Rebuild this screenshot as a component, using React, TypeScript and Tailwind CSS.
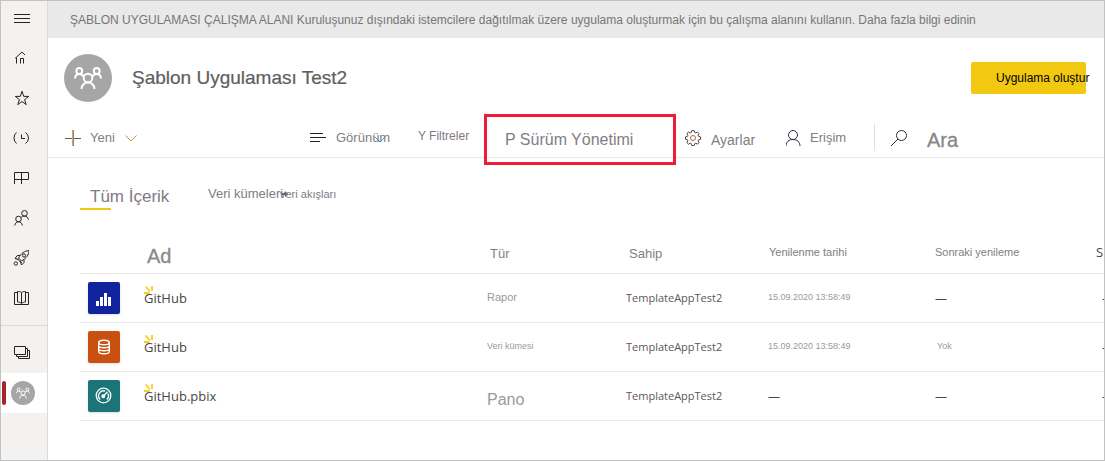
import React from "react";

type IconProps = { className?: string; children: React.ReactNode; box?: string };

function Icon({ className = "w-4 h-4", children, box = "0 0 16 16" }: IconProps) {
  return (
    <svg
      viewBox={box}
      className={`shrink-0 ${className}`}
      fill="none"
      stroke="currentColor"
      strokeWidth="1"
      aria-hidden="true"
    >
      {children}
    </svg>
  );
}

function GroupIcon({ className }: { className: string }) {
  return (
    <svg viewBox="0 0 28 24" className={className} fill="none" stroke="#fff" strokeWidth="2" aria-hidden="true">
      <circle cx="14" cy="12" r="4.3" />
      <path d="M7.500 23c.4-4 2.800-6.600 6.500-6.600s6.100 2.600 6.500 6.600" />
      <circle cx="5.300" cy="5" r="2.900" />
      <circle cx="22.700" cy="5" r="2.900" />
      <path d="M1 12.500C1.200 9.800 2.700 8 5.300 8c1.800 0 3.300.9 4 2.300M27 12.500C26.800 9.800 25.300 8 22.700 8c-1.800 0-3.300.9-4 2.300" />
    </svg>
  );
}

const navItems = [
  {
    label: "Giriş",
    icon: (
      <Icon>
        <path d="M3.500 13.500V8L2.500 8 9 2l3 3M7.500 13.500v-5h3v5" />
      </Icon>
    ),
  },
  {
    label: "Sık kullanılanlar",
    icon: (
      <Icon>
        <path d="M9 1.200l1.700 5.200h5l-4.100 3.200 1.600 5L9 11.500l-4.200 3.100 1.600-5-4.100-3.200h5z" />
      </Icon>
    ),
  },
  {
    label: "Son kullanılanlar",
    icon: (
      <Icon>
        <path d="M3.500 2.500Q1 4.500 1 8t2.500 5.500M12.500 2.500q3 2 3 5.500t-3 5.500M8.500 4.500v4h3.500" />
      </Icon>
    ),
  },
  {
    label: "Uygulamalar",
    icon: (
      <Icon>
        <path d="M1.500 14V2.500h14V9.500H1M8.500 2.500V14" />
      </Icon>
    ),
  },
  {
    label: "Benimle paylaşılanlar",
    icon: (
      <Icon>
        <circle cx="11.500" cy="3.300" r="2.800" />
        <circle cx="5.500" cy="9" r="2.800" />
        <path d="M1.800 15.500c.3-2.500 1.700-3.700 3.700-3.700s3.500 1.200 3.800 3.700M8.200 7.300c.7-.8 1.900-1.200 3.300-1.200 2.200 0 3.500 1.300 3.900 3.600" />
      </Icon>
    ),
  },
  {
    label: "Öğrenin",
    icon: (
      <Icon>
        <path d="M16 .6C11.500.8 8.500 3 5.500 8l3 3c5-3 7.300-6 7.500-10.400zM7 5.500H4.300L2 8.500l3.500 1M11 9.500v3L8.500 15l-1.200-4M4 8.500l4.500 4.500" />
        <circle cx="11" cy="5.500" r="1.600" />
        <circle cx="2.800" cy="13.500" r="1.700" />
      </Icon>
    ),
  },
  {
    label: "Çalışma alanları kitaplığı",
    icon: (
      <Icon>
        <path d="M8.500 2.500v11M8.500 2.500C7.500 1.500 6 1.500 4.500 1.500v10.500c1.500 0 3 .5 4 1.500 1-1 2.500-1.500 4-1.500V1.500c-1.500 0-3 0-4 1zM4.500 2.500h-3v12h14v-12h-3" />
      </Icon>
    ),
  },
];

function NewBadge() {
  return (
    <svg
      viewBox="0 0 12 12"
      className="absolute left-0 -top-1 w-3 h-3"
      fill="none"
      stroke="#f7cf1d"
      strokeWidth="1.800"
      aria-hidden="true"
    >
      <path d="M1.500 2.500L6 7.500M8 2v5M0 9h5.500" />
    </svg>
  );
}

const reportIcon = (
  <svg viewBox="0 0 32 32" className="w-8 h-8" fill="#fff" aria-hidden="true">
    <path d="M8 19h3v5H8zM12 15h3v9h-3zM16 11h3v13h-3zM20 15h3v9h-3z" />
  </svg>
);

const datasetIcon = (
  <svg viewBox="0 0 32 32" className="w-8 h-8" fill="none" stroke="#fff" strokeWidth="1.400" aria-hidden="true">
    <ellipse cx="16" cy="11.500" rx="5.300" ry="2.200" />
    <path d="M10.700 11.500v9c0 1.200 2.300 2.200 5.300 2.200s5.300-1 5.300-2.200v-9M10.700 14.500c0 1.200 2.300 2.200 5.300 2.200s5.300-1 5.300-2.200M10.700 17.500c0 1.200 2.300 2.200 5.300 2.200s5.300-1 5.300-2.200" />
  </svg>
);

const dashboardIcon = (
  <svg viewBox="0 0 32 32" className="w-8 h-8" fill="none" stroke="#fff" strokeWidth="1.300" aria-hidden="true">
    <circle cx="15.500" cy="15.500" r="7.300" />
    <path d="M12.200 19.500a5 5 0 0 1 5-8.400M19.900 13.500a5 5 0 0 1-1.100 6M16 15.500l3.500-3.700" />
    <circle cx="15.300" cy="16.200" r="1.300" fill="#fff" />
  </svg>
);

const rows = [
  { name: "GitHub", icon: reportIcon, tile: "bg-[#12239e]", type: "Rapor", typeStyle: "text-[11px]", date: "15.09.2020 13:58:49", next: "" },
  { name: "GitHub", icon: datasetIcon, tile: "bg-[#ca5010]", type: "Veri kümesi", typeStyle: "text-[9px]", date: "15.09.2020 13:58:49", next: "Yok" },
  { name: "GitHub.pbix", icon: dashboardIcon, tile: "bg-[#1a7478]", type: "Pano", typeStyle: "text-base pt-2", date: "", next: "" },
];

function Dash() {
  return <span className="block pt-0.5 font-['Open_Sans',sans-serif] text-xs text-[#484644]">—</span>;
}

export default function App() {
  return (
    <div className="flex min-h-screen overflow-hidden border border-[#c2c2c2] bg-white font-['Liberation_Sans',Arial,sans-serif] text-[#808080]">
      <nav aria-label="Gezinti" className="flex w-[47px] shrink-0 flex-col border-r border-[#dddbd9] bg-[#f3f2f1] text-[#252423]">
        <button aria-label="Gezinti bölmesi" className="mb-px flex h-9 items-center pl-[13px]">
          <Icon>
            <path d="M0 3.500h16M0 7.500h16M0 11.500h16" />
          </Icon>
        </button>
        {navItems.map((item) => (
          <a key={item.label} href="#" aria-label={item.label} className="flex h-10 items-center pl-3">
            {item.icon}
          </a>
        ))}
        <div className="mt-[7px] border-t border-[#dddbd9]" />
        <a href="#" aria-label="Çalışma alanları" className="flex h-[47px] items-center pt-1 pl-[13px]">
          <Icon>
            <path d="M.5 2.500h11v8H.5zM11.500 4.500h2v8h-11v-2M13.500 6.500h2v8h-11v-2" />
          </Icon>
        </a>
        <a href="#" aria-label="Şablon Uygulaması Test2" className="flex h-10 items-center bg-white pl-px">
          <span className="h-6 w-1 rounded-xs bg-[#a4262c]" />
          <span className="ml-[5px] flex h-6 w-6 items-center justify-center rounded-full bg-[#a6a6a6]">
            <GroupIcon className="h-3 w-3.5" />
          </span>
        </a>
      </nav>

      <main className="min-w-0 flex-1 overflow-hidden">
        <p className="flex h-[37px] items-center bg-[#e9e9e9] pl-[22px] text-xs whitespace-nowrap text-[#767676]">
          ŞABLON UYGULAMASI ÇALIŞMA ALANI Kuruluşunuz dışındaki istemcilere dağıtılmak üzere uygulama oluşturmak için bu
          çalışma alanını kullanın. Daha fazla bilgi edinin
        </p>

        <header className="flex h-20 items-center pr-[18px] pl-4">
          <span className="flex h-12 w-12 items-center justify-center rounded-full bg-[#a6a6a6]">
            <GroupIcon className="h-6 w-7" />
          </span>
          <h1 className="ml-5 flex-1 text-[19px] leading-6 text-[#605e5c] [-webkit-text-stroke:0.2px_#605e5c]">Şablon Uygulaması Test2</h1>
          <button className="h-8 w-[115px] rounded-xs bg-[#f2c811] pl-[25px] text-left text-xs whitespace-nowrap text-black">
            Uygulama oluştur
          </button>
        </header>

        <div className="flex h-10 items-stretch border-b border-[#eaeaea] pl-[17px] whitespace-nowrap">
          <button className="flex w-[245px] shrink-0 items-center text-[13px]">
            <Icon className="h-4 w-4 text-[#e0a050]">
              <path d="M0 8.500h16" stroke="#605e5c" />
              <path d="M7.500 0v16" />
              <path d="M8.500 0v16" stroke="#7d8794" />
            </Icon>
            <span className="ml-[9px]">Yeni</span>
            <Icon className="ml-2.5 h-3 w-3 text-[#c98a50]" box="0 0 12 12">
              <path d="M.5 3.500L6 9l5.500-5.500" />
            </Icon>
          </button>
          <button className="flex w-[108px] shrink-0 items-center text-[13px]">
            <Icon className="h-4 w-4 text-[#252423]">
              <path d="M0 3.500h13M0 7.500h16M0 11.500h10" />
            </Icon>
            <span className="relative ml-2.5">
              Görünüm
              <Icon className="absolute top-1.5 right-1 h-3 w-3 text-[#3f8fc8]" box="0 0 12 12">
                <path d="M.5 2.500L6 8l5.500-5.500" />
              </Icon>
            </span>
          </button>
          <button className="flex w-[66px] shrink-0 items-center pb-1 text-xs text-[#807784]">Y Filtreler</button>
          <button className="relative flex w-[192px] shrink-0 items-center pt-1 pl-[21px] text-base text-[#827d85]">
            P Sürüm Yönetimi
            <span className="pointer-events-none absolute inset-x-0 -top-1 -bottom-2 border-3 border-[#ee1c36]" />
          </button>
          <button className="flex w-[110px] shrink-0 items-center pl-[9px] text-sm">
            <Icon className="h-4 w-4 text-[#4a4644]">
              <path d="M6.800.6h2.400l.5 1.900 1.100.5 1.700-1 1.600 1.600-1 1.700.5 1.100 1.900.5v2.400l-1.900.5-.5 1.100 1 1.700-1.600 1.600-1.700-1-1.100.5-.5 1.900H6.800l-.5-1.900-1.100-.5-1.700 1-1.600-1.600 1-1.700-.5-1.100-1.900-.5V6.900l1.900-.5.5-1.100-1-1.700L3.500 2l1.700 1 1.100-.5z" />
              <circle cx="8" cy="8" r="2.500" stroke="#b06a3c" />
            </Icon>
            <span className="ml-2.5 pt-1">Ayarlar</span>
          </button>
          <button className="flex w-[88px] shrink-0 items-center text-[13px]">
            <Icon className="h-4 w-4 text-[#302c3c]">
              <circle cx="7" cy="5" r="4.500" />
              <path d="M0 16c.3-4.200 2.800-6.500 7-6.500s6.700 2.300 7 6.500" />
            </Icon>
            <span className="ml-2">Erişim</span>
          </button>
          <label className="my-1.5 flex min-w-0 flex-1 items-center border-l border-[#e1dfdd] pl-4">
            <Icon className="h-4 w-4 text-[#302c3c]">
              <circle cx="10.500" cy="5.500" r="5" />
              <path d="M7 9L0 16" />
            </Icon>
            <input
              type="search"
              aria-label="Ara"
              placeholder="Ara"
              className="ml-5 min-w-0 flex-1 pt-1 text-xl leading-6 outline-none placeholder:text-[#8a868c] placeholder:[-webkit-text-stroke:0.3px_#8a868c]"
            />
          </label>
        </div>

        <div role="tablist" className="flex h-[72px] items-start pt-[25px] pl-8 whitespace-nowrap text-[#807b85]">
          <button role="tab" aria-selected="true" className="relative h-[27px] w-32 pl-2.5 text-left text-[17px] leading-7">
            Tüm İçerik
            <span className="absolute bottom-0 left-0 h-0.5 w-[31px] bg-[#f2c811]" />
          </button>
          <button role="tab" aria-selected="false" className="relative w-[72px] text-left text-[13px] leading-[22px]">
            Veri kümeleri
            <svg viewBox="0 0 6 6" className="absolute top-2 -right-2 h-1.5 w-1.5" fill="#6b6675" aria-hidden="true">
              <path d="M0 2h3V0l3 3-3 3V4H0z" />
            </svg>
          </button>
          <button role="tab" aria-selected="false" className="text-left text-[11px] leading-[22px]">
            veri akışları
          </button>
        </div>

        <div className="pl-8">
          <table className="w-full table-fixed border-collapse text-left whitespace-nowrap">
            <colgroup>
              <col className="w-16" />
              <col />
              <col className="w-[139px]" />
              <col className="w-[142px]" />
              <col className="w-[167px]" />
              <col className="w-[161px]" />
              <col className="w-2" />
            </colgroup>
            <thead>
              <tr className="h-[43px] border-b border-[#eaeaea] *:p-0 *:font-normal">
                <th aria-label="Simge" />
                <th>
                  <span className="block pt-2.5 pl-[3px] text-xl leading-6 text-[#8a8a8a] [-webkit-text-stroke:0.3px_#8a8a8a]">Ad</span>
                </th>
                <th>
                  <span className="block pt-1 pl-[3px] text-[13px]">Tür</span>
                </th>
                <th>
                  <span className="block pt-1 pl-[3px] text-[13px]">Sahip</span>
                </th>
                <th>
                  <span className="block pt-0.5 pl-px text-[11px]">Yenilenme tarihi</span>
                </th>
                <th>
                  <span className="block pt-0.5 text-[11px]">Sonraki yenileme</span>
                </th>
                <th className="font-['Open_Sans',sans-serif] text-[13px] text-[#484644]">
                  <span className="block pt-0.5">S</span>
                </th>
              </tr>
            </thead>
            <tbody>
              {rows.map((row, index) => (
                <tr key={index} className="h-[49px] border-b border-[#eaeaea] *:p-0">
                  <td>
                    <span className={`ml-2 block h-8 w-8 rounded-xs shadow-sm ${row.tile}`}>{row.icon}</span>
                  </td>
                  <td>
                    <a href="#" className="relative mt-0.5 inline-block font-['Open_Sans',sans-serif] text-[13px] leading-5 text-[#484644]">
                      {row.name}
                      <NewBadge />
                    </a>
                  </td>
                  <td className="text-[#9a9a9a]">
                    <span className={`block ${row.typeStyle}`}>{row.type}</span>
                  </td>
                  <td className="font-['Open_Sans',sans-serif] text-[11px] text-[#5a5856]">
                    <span className="block pt-0.5">TemplateAppTest2</span>
                  </td>
                  <td>{row.date ? <span className="block text-[9px] text-[#9a9a9a]">{row.date}</span> : <Dash />}</td>
                  <td>{row.next ? <span className="block pl-0.5 text-[9px] text-[#9a9a9a]">{row.next}</span> : <Dash />}</td>
                  <td>
                    <span className="block pl-1.5">
                      <Dash />
                    </span>
                  </td>
                </tr>
              ))}
            </tbody>
          </table>
        </div>
      </main>
    </div>
  );
}
